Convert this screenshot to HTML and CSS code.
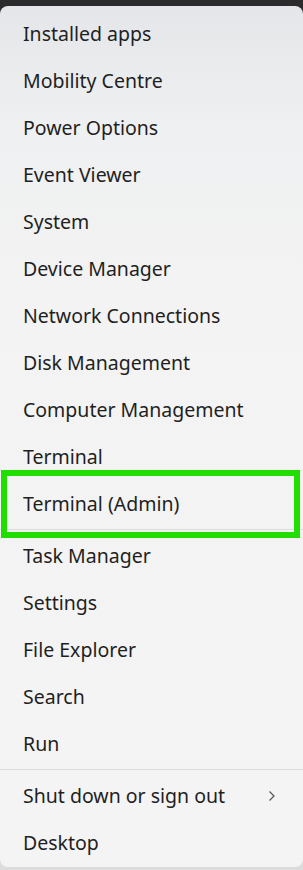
FILE: index.html
```html
<!DOCTYPE html>
<html>
<head>
<meta charset="utf-8">
<link rel="stylesheet" href="styles.css">
</head>
<body>
<div class="menu">
  <div class="item">Installed apps</div>
  <div class="item">Mobility Centre</div>
  <div class="item">Power Options</div>
  <div class="item">Event Viewer</div>
  <div class="item">System</div>
  <div class="item">Device Manager</div>
  <div class="item">Network Connections</div>
  <div class="item">Disk Management</div>
  <div class="item">Computer Management</div>
  <div class="item">Terminal</div>
  <div class="item highlighted">Terminal (Admin)</div>
  <div class="sep"></div>
  <div class="item">Task Manager</div>
  <div class="item">Settings</div>
  <div class="item">File Explorer</div>
  <div class="item">Search</div>
  <div class="item">Run</div>
  <div class="sep"></div>
  <div class="item has-sub">Shut down or sign out
    <svg class="chev" width="8" height="12" viewBox="0 0 8 12"><path d="M1.5 1.5 L6 6 L1.5 10.5" fill="none" stroke="#5a5a5a" stroke-width="1.3"/></svg>
  </div>
  <div class="item">Desktop</div>
</div>
</body>
</html>
```
FILE: styles.css
```css
html, body {
  margin: 0;
  padding: 0;
}
body {
  width: 303px;
  height: 870px;
  background: linear-gradient(#2b2b2b 0, #2b2b2b 30px, #dcdcdc 30px, #dcdcdc 100%);
  font-family: "Noto Sans", "Open Sans", sans-serif;
  overflow: hidden;
}
.menu {
  margin-top: 6px;
  height: 861px;
  box-sizing: border-box;
  padding-top: 4px;
  border-radius: 8px;
  background: linear-gradient(180deg, #e4e6e9 0px, #eff0f1 120px, #f3f3f3 300px, #f4f4f4 100%);
  display: flex;
  flex-direction: column;
}
.item {
  position: relative;
  height: 47px;
  flex: none;
  display: flex;
  align-items: center;
  padding-left: 23px;
  padding-right: 27px;
  font-size: 19.5px;
  color: #1f1f1f;
}
.has-sub {
  justify-content: space-between;
}
.chev {
  display: block;
}
.sep {
  flex: none;
  height: 1px;
  margin: 2px 0;
  background: #dcdcdc;
}
.highlighted::after {
  content: "";
  position: absolute;
  left: 1px;
  top: -10px;
  width: 299px;
  height: 68px;
  box-sizing: border-box;
  border: 6px solid #22dd00;
}
```
